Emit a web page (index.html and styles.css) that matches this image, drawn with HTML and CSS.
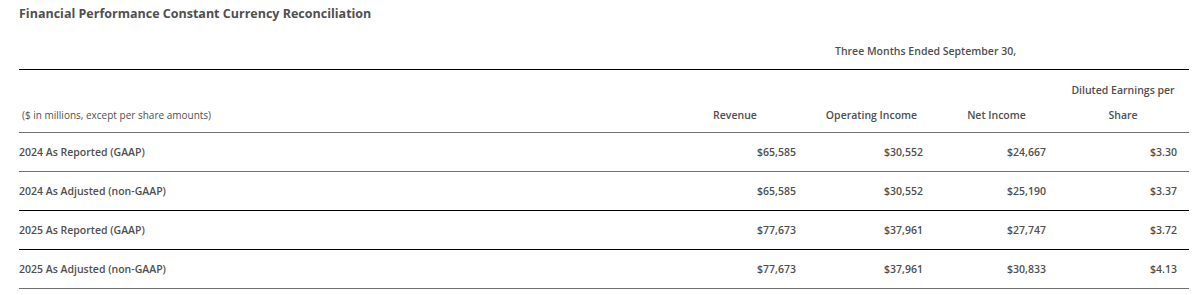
FILE: index.html
```html
<!DOCTYPE html>
<html lang="en">
<head>
  <meta charset="UTF-8" />
  <meta name="viewport" content="width=device-width, initial-scale=1" />
  <title>Financial Performance Constant Currency Reconciliation</title>
  <link rel="stylesheet" href="styles.css">
</head>
<body>
  <div class="report">
    <h1>Financial Performance Constant Currency Reconciliation</h1>

    <div class="period-row">
      <div></div>
      <div class="period">Three Months Ended September 30,</div>
    </div>

    <div class="row head">
      <div class="label note">($ in millions, except per share amounts)</div>
      <div class="col c1">Revenue</div>
      <div class="col c2">Operating Income</div>
      <div class="col c3">Net Income</div>
      <div class="col c4">Diluted Earnings per<br>Share</div>
    </div>

    <div class="row">
      <div class="label">2024 As Reported (GAAP)</div>
      <div class="num c1">$65,585</div>
      <div class="num c2">$30,552</div>
      <div class="num c3">$24,667</div>
      <div class="num c4">$3.30</div>
    </div>
    <div class="row dark">
      <div class="label">2024 As Adjusted (non-GAAP)</div>
      <div class="num c1">$65,585</div>
      <div class="num c2">$30,552</div>
      <div class="num c3">$25,190</div>
      <div class="num c4">$3.37</div>
    </div>
    <div class="row dark">
      <div class="label">2025 As Reported (GAAP)</div>
      <div class="num c1">$77,673</div>
      <div class="num c2">$37,961</div>
      <div class="num c3">$27,747</div>
      <div class="num c4">$3.72</div>
    </div>
    <div class="row">
      <div class="label">2025 As Adjusted (non-GAAP)</div>
      <div class="num c1">$77,673</div>
      <div class="num c2">$37,961</div>
      <div class="num c3">$30,833</div>
      <div class="num c4">$4.13</div>
    </div>
  </div>
</body>
</html>
```

FILE: styles.css
```css
* {
  box-sizing: border-box;
}
body {
  margin: 0;
  background: #ffffff;
  color: #4f4f4f;
  font-family: 'Open Sans', 'Noto Sans', sans-serif;
  font-size: 10.5px;
}
.report {
  width: 1170px;
  margin-left: 19px;
}
h1 {
  margin: 0;
  font-size: 12.5px;
  font-weight: 700;
  line-height: 27px;
  color: #4f4f4f;
}
.period-row,
.row {
  display: grid;
  grid-template-columns: 651px 130px 143px 107px 139px;
}
.period-row {
  padding: 14px 0 8px;
}
.period {
  grid-column: 2 / 6;
  text-align: center;
  font-weight: 600;
  line-height: 20px;
  padding-right: 8px;
}
.row {
  font-weight: 600;
  line-height: 38px;
  border-bottom: 1px solid #707070;
}
.row.dark {
  border-bottom-color: #000000;
}
.row.head {
  border-top: 1px solid #000000;
  height: 64px;
  align-items: end;
  line-height: 25px;
  padding-bottom: 4px;
}
.label {
  padding-left: 0;
}
.note {
  font-weight: 400;
  font-size: 10px;
  padding-left: 3px;
}
.col {
  text-align: center;
}
.col.c4 {
  padding-left: 7px;
}
.num {
  text-align: right;
}
.num.c1 { padding-right: 4px; }
.num.c2 { padding-right: 20px; }
.num.c3 { padding-right: 4px; }
.num.c4 { padding-right: 12px; }
```
